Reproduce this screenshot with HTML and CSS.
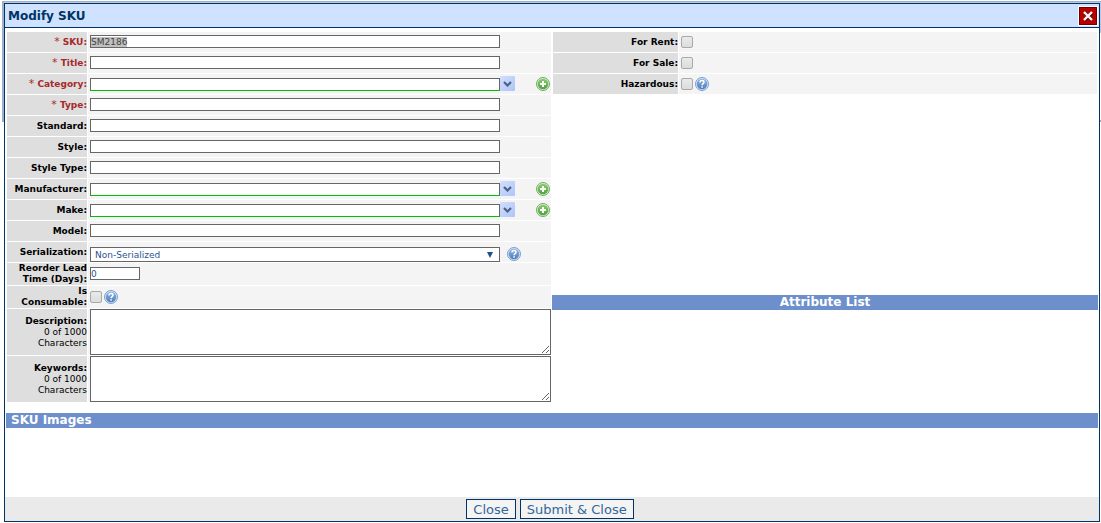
FILE: index.html
```html
<!doctype html>
<html lang="en">
<head>
<meta charset="UTF-8">
<title>Modify SKU</title>
<link rel="stylesheet" href="styles.css">
</head>
<body>
<!-- shared icons -->
<svg class="sprite" aria-hidden="true">
	<defs>
		<linearGradient id="blue" x1="0" y1="0" x2="0" y2="1">
			<stop offset="0" stop-color="#8fb4e2"/>
			<stop offset="1" stop-color="#4d7fbd"/>
		</linearGradient>
		<linearGradient id="green" x1="0" y1="0" x2="0" y2="1">
			<stop offset="0" stop-color="#8acb6c"/>
			<stop offset="1" stop-color="#4fa341"/>
		</linearGradient>
	</defs>
	<symbol id="help" viewBox="0 0 14 14">
		<circle cx="7" cy="7" r="6.5" fill="#d3e2f4" stroke="#7c9fcc"/>
		<circle cx="7" cy="7" r="5.2" fill="url(#blue)"/>
		<path d="M5 5.600c0-1.300.8-2 2-2s2 .7 2 1.700c0 1.300-1.900 1.400-1.900 2.900M7.100 9.200v1.500" fill="none" stroke="#fff" stroke-width="1.500"/>
	</symbol>
	<symbol id="plus" viewBox="0 0 14 14">
		<circle cx="7" cy="7" r="6.500" fill="#d8efcd" stroke="#74a866"/>
		<circle cx="7" cy="7" r="5.300" fill="url(#green)"/>
		<path d="M7 4v6M4 7h6" stroke="#fff" stroke-width="2"/>
	</symbol>
	<symbol id="arrow" viewBox="0 0 9 6">
		<path d="M1 1l3.500 3.500L8 1" fill="none" stroke="#4d6185" stroke-width="2.200"/>
	</symbol>
</svg>

<div class="page_panel"><div class="page_title"></div></div>

<div class="dialog" role="dialog" aria-labelledby="dlgTitle">
	<div class="dialog_header">
		<h1 id="dlgTitle">Modify SKU</h1>
		<button type="button" class="btn_x" aria-label="Close window">
			<svg viewBox="0 0 16 16">
				<path d="M5 5l7 7M12 5l-7 7" stroke="#500" stroke-width="3"/>
				<path d="M4 4l8 8M12 4l-8 8" stroke="#fff" stroke-width="2.400"/>
			</svg>
		</button>
	</div>

	<form class="dialog_body">
		<div class="columns">
			<div class="fields">
				<div class="row">
					<label class="name required" for="sku"><i>*</i> SKU:</label>
					<div class="value"><input type="text" id="sku" class="text" value="SM2186"></div>
				</div>
				<div class="row">
					<label class="name required" for="title"><i>*</i> Title:</label>
					<div class="value"><input type="text" id="title" class="text"></div>
				</div>
				<div class="row">
					<label class="name required" for="category"><i>*</i> Category:</label>
					<div class="value">
						<div class="combo">
							<input type="text" id="category" class="text">
							<button type="button" class="btn_arrow" aria-label="Show categories"><svg><use href="#arrow"/></svg></button>
						</div>
						<button type="button" class="btn_icon add" aria-label="Add category"><svg><use href="#plus"/></svg></button>
					</div>
				</div>
				<div class="row">
					<label class="name required" for="type"><i>*</i> Type:</label>
					<div class="value"><input type="text" id="type" class="text"></div>
				</div>
				<div class="row">
					<label class="name" for="standard">Standard:</label>
					<div class="value"><input type="text" id="standard" class="text"></div>
				</div>
				<div class="row">
					<label class="name" for="style">Style:</label>
					<div class="value"><input type="text" id="style" class="text"></div>
				</div>
				<div class="row">
					<label class="name" for="styleType">Style Type:</label>
					<div class="value"><input type="text" id="styleType" class="text"></div>
				</div>
				<div class="row">
					<label class="name" for="manufacturer">Manufacturer:</label>
					<div class="value">
						<div class="combo">
							<input type="text" id="manufacturer" class="text">
							<button type="button" class="btn_arrow" aria-label="Show manufacturers"><svg><use href="#arrow"/></svg></button>
						</div>
						<button type="button" class="btn_icon add" aria-label="Add manufacturer"><svg><use href="#plus"/></svg></button>
					</div>
				</div>
				<div class="row">
					<label class="name" for="make">Make:</label>
					<div class="value">
						<div class="combo">
							<input type="text" id="make" class="text">
							<button type="button" class="btn_arrow" aria-label="Show makes"><svg><use href="#arrow"/></svg></button>
						</div>
						<button type="button" class="btn_icon add" aria-label="Add make"><svg><use href="#plus"/></svg></button>
					</div>
				</div>
				<div class="row">
					<label class="name" for="model">Model:</label>
					<div class="value"><input type="text" id="model" class="text"></div>
				</div>
				<div class="row">
					<label class="name" for="serialization">Serialization:</label>
					<div class="value bottom">
						<div class="select_box">
							<select id="serialization">
								<option>Non-Serialized</option>
							</select>
							<svg viewBox="0 0 6 6"><path d="M0 0h6L3 6z" fill="#1f4e8c"/></svg>
						</div>
						<button type="button" class="btn_icon help_far" aria-label="Help"><svg><use href="#help"/></svg></button>
					</div>
				</div>
				<div class="row">
					<label class="name" for="leadTime">Reorder Lead Time (Days):</label>
					<div class="value"><input type="text" id="leadTime" class="text short" value="0"></div>
				</div>
				<div class="row">
					<label class="name" for="consumable">Is<br>Consumable:</label>
					<div class="value">
						<input type="checkbox" id="consumable" class="check">
						<button type="button" class="btn_icon" aria-label="Help"><svg><use href="#help"/></svg></button>
					</div>
				</div>
				<div class="row">
					<label class="name" for="description">Description: <small>0 of 1000 Characters</small></label>
					<div class="value area"><textarea id="description"></textarea></div>
				</div>
				<div class="row">
					<label class="name" for="keywords">Keywords: <small>0 of 1000 Characters</small></label>
					<div class="value area"><textarea id="keywords"></textarea></div>
				</div>
			</div>

			<div class="side">
				<div class="fields wide">
					<div class="row">
						<label class="name" for="forRent">For Rent:</label>
						<div class="value"><input type="checkbox" id="forRent" class="check"></div>
					</div>
					<div class="row">
						<label class="name" for="forSale">For Sale:</label>
						<div class="value"><input type="checkbox" id="forSale" class="check"></div>
					</div>
					<div class="row">
						<label class="name" for="hazardous">Hazardous:</label>
						<div class="value">
							<input type="checkbox" id="hazardous" class="check">
							<button type="button" class="btn_icon" aria-label="Help"><svg><use href="#help"/></svg></button>
						</div>
					</div>
				</div>
				<h2 class="bar center">Attribute List</h2>
			</div>
		</div>
		<h2 class="bar">SKU Images</h2>
	</form>

	<div class="dialog_footer">
		<button type="button">Close</button>
		<button type="button">Submit &amp; Close</button>
	</div>
</div>
<script>
document.getElementById("sku").select();
</script>
</body>
</html>
```

FILE: styles.css
```css
*{
	box-sizing:border-box;
}
body{
	margin:0;
	background-color:#ffffff;
	font-family:Verdana, "DejaVu Sans", sans-serif;
	font-size:9px; line-height:11px;
	color:#000000;
}
button, input, select, textarea{
	margin:0; padding:0;
	font-family:inherit; font-size:inherit;
	color:#2a5590;
}
svg{
	display:block;
}
.sprite{
	position:absolute; width:0; height:0;
}

/* page behind the dialog */
.page_panel{
	position:absolute;
	top:1px; left:2px; right:0;
	height:121px;
	border:1px solid #9fb0cc;
	border-width:1px 0 2px 2px;
}
.page_title{
	height:31px;
	background-color:#b9c9e2;
}

.dialog{
	position:relative;
	display:flex; flex-direction:column;
	min-height:calc(100vh - 4px);
	margin:3px 1px 1px 4px;
	border:1px solid #003366;
	background-color:#ffffff;
}
.dialog_header{
	display:flex;
	justify-content:space-between; align-items:center;
	height:24px;
	padding:0 1px 0 3px;
	border-bottom:1px solid #003366;
	background-color:#cfe2ff;
}
.dialog_header h1{
	margin:0;
	font-size:12px; line-height:16px;
	color:#003366;
}
.btn_x{
	width:20px; height:20px;
	border:1px solid #ffffff;
	background-color:#ffffff;
}
.btn_x svg{
	width:18px; height:18px;
	border:1px solid #700000;
	background-color:#b80000;
}
.dialog_body{
	flex:1;
	padding:3px 1px 0;
}
.columns{
	display:grid;
	grid-template-columns:1fr 1fr;
	margin-bottom:10px;
}
.fields{
	display:flex; flex-direction:column;
	gap:1px;
	padding:1px;
}
.row{
	display:grid;
	grid-template-columns:80px 1fr;
	gap:1px;
	min-height:20px;
}
.wide .row{
	grid-template-columns:125px 1fr;
}
.name{
	align-content:center;
	background-color:#dedede;
	font-weight:bold;
	text-align:right;
}
.name i{
	font-size:11px; font-style:normal; font-weight:normal;
}
.name small{
	display:block;
	padding-left:20px;
	font-size:9px; font-weight:normal;
}
.required{
	color:#a52a2a;
}
.value{
	display:flex; align-items:center;
	padding:0 0 1px 2px;
	background-color:#f4f4f4;
}
.area{
	padding-bottom:0;
}
.bottom{
	flex-wrap:wrap;
	align-items:flex-start; align-content:flex-end;
	padding-bottom:0;
}
.text{
	width:410px; height:13px;
	border:1px solid #666666;
	background-color:#ffffff;
}
.text:focus{
	outline:none;
}
.text::selection{
	background-color:#c0c0c0;
	color:#444444;
}
.short{
	width:50px;
}
.combo{
	display:flex; align-items:flex-end;
}
.combo .text{
	border-bottom-color:#00c000;
}
.btn_arrow{
	display:flex;
	align-items:center; justify-content:center;
	width:15px; height:15px;
	border:0; border-radius:1px;
	background:linear-gradient(135deg, #d3defc, #adc5fa);
}
.btn_arrow svg{
	width:9px; height:6px;
}
.btn_icon{
	width:14px; height:14px;
	margin-left:2px;
	border:0;
	background:none;
}
.btn_icon svg{
	width:14px; height:14px;
}
.add{
	margin-left:auto; margin-right:1px;
}
.help_far{
	margin-left:7px;
}
.select_box{
	display:grid; align-items:center;
	width:410px; height:15px;
}
.select_box select, .select_box svg{
	grid-area:1 / 1;
}
.select_box select{
	appearance:none;
	width:100%; height:15px;
	padding:0 4px;
	border:1px solid #666666; border-radius:0;
	background-color:#ffffff;
}
.select_box svg{
	justify-self:end;
	width:6px; height:6px;
	margin-right:7px;
	z-index:1;
	pointer-events:none;
}
.check{
	appearance:none;
	width:12px; height:12px;
	border:1px solid #a9a9a9; border-radius:2px;
	background:linear-gradient(#eaeaea, #dcdcdc);
}
textarea{
	width:100%; height:46px;
	border:1px solid #666666;
	background-color:#ffffff;
}
.side .fields{
	min-height:264px;
}
.bar{
	margin:0;
	padding-left:5px;
	background-color:#6d8fcb;
	font-size:12px; line-height:15px;
	color:#ffffff;
}
.center{
	padding:0;
	text-align:center;
}
.dialog_footer{
	display:flex;
	justify-content:center; align-items:center;
	gap:4px;
	height:24px;
	padding-right:4px;
	background-color:#eaeaea;
}
.dialog_footer button{
	height:20px;
	padding:0 6px;
	border:1px solid #003366;
	background-color:#f4f4f4;
	font-size:13px;
	color:#336699;
}
```
